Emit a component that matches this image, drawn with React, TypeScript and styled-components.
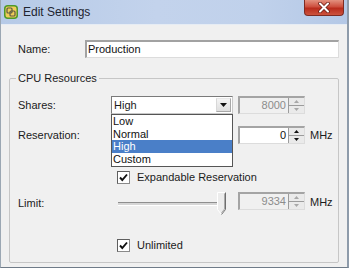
import styled, { createGlobalStyle } from 'styled-components';

const GlobalStyle = createGlobalStyle`
  html, body {
    margin: 0;
    padding: 0;
    background: #fff;
  }
  body {
    font-family: "Liberation Sans", Arial, sans-serif;
    font-size: 11px;
    color: #1b1b1b;
  }
`;

const Window = styled.div`
  width: 349px;
  height: 268px;
  box-sizing: border-box;
  display: flex;
  flex-direction: column;
  background: #f0f0f0;
  border-left: 1px solid #9ba7b3;
  border-right: 2px solid #8e9baa;
  border-bottom: 1px solid #6f7b88;
`;

const TitleBar = styled.div`
  flex: none;
  height: 25px;
  display: flex;
  align-items: flex-start;
  background: linear-gradient(90deg, #b6cae7 0%, #c3d3ec 45%, #c0d1eb 75%, #b4c8e6 100%);
  border-bottom: 1px solid #e6ecf4;
  box-sizing: border-box;
`;

const IconBox = styled.svg`
  flex: none;
  margin: 5px 0 0 3px;
`;

const Title = styled.span`
  margin-left: 5px;
  line-height: 24px;
  font-size: 12px;
  color: #1e2430;
`;

const CloseButton = styled.div`
  flex: none;
  width: 40px;
  height: 16px;
  margin: 0 3px 0 auto;
  box-sizing: border-box;
  display: flex;
  align-items: center;
  justify-content: center;
  border: 1px solid #7e2b22;
  border-top: none;
  border-radius: 0 0 4px 4px;
  background: linear-gradient(#e3917f 0%, #cd4f3e 45%, #b92c1c 55%, #cc533e 100%);
`;

const Body = styled.div`
  flex: 1;
  display: flex;
  flex-direction: column;
  padding: 15px 8px 4px 8px;
  min-height: 0;
`;

const NameRow = styled.div`
  display: flex;
  align-items: center;
  padding-left: 9px;
`;

const NameLabel = styled.span`
  flex: none;
  width: 67px;
  line-height: 13px;
`;

const TextBox = styled.div`
  flex: 1;
  height: 18px;
  box-sizing: border-box;
  padding-left: 1px;
  background: #fff;
  border-style: solid;
  border-width: 2px 1px 1px 2px;
  border-color: #a2a2a2 #dcdcdc #dcdcdc #a2a2a2;
  line-height: 14px;
  color: #111;
`;

const Group = styled.fieldset`
  flex: 1;
  min-width: 0;
  margin: 14px 0 0;
  padding: 11px 0 0 8px;
  border: 1px solid #c6c6c6;
  border-radius: 2px;
`;

const Legend = styled.legend`
  padding: 0 2px;
  margin-left: -2px;
  line-height: 13px;
`;

const Row = styled.div<{ $gap?: number; $align?: string }>`
  display: grid;
  grid-template-columns: 88px 122px 67px auto;
  column-gap: 5px;
  align-items: ${p => p.$align || 'center'};
  margin-top: ${p => p.$gap || 0}px;
`;

const FieldLabel = styled.span<{ $offset?: number }>`
  line-height: 13px;
  margin-top: ${p => p.$offset || 0}px;
`;

const Unit = styled.span<{ $offset?: number }>`
  line-height: 13px;
  margin-top: ${p => p.$offset || 0}px;
`;

const SelectWrap = styled.div`
  position: relative;
`;

const SelectBox = styled.div`
  height: 18px;
  box-sizing: border-box;
  display: flex;
  align-items: center;
  justify-content: space-between;
  padding-left: 2px;
  background: #fff;
  border-style: solid;
  border-width: 1px;
  border-color: #7a7a7a #c8c8c8 #c8c8c8 #7a7a7a;
  line-height: 13px;
`;

const ArrowButton = styled.div`
  width: 15px;
  height: 14px;
  margin-right: 1px;
  box-sizing: border-box;
  display: flex;
  align-items: center;
  justify-content: center;
  background: linear-gradient(#f4f4f4, #dedede);
  border: 1px solid #a8a8a8;
  border-left-color: #d8d8d8;
  border-top-color: #e8e8e8;
`;

const DropList = styled.ul`
  position: absolute;
  top: 18px;
  left: 0;
  width: 122px;
  box-sizing: border-box;
  margin: 0;
  padding: 0 0 1px;
  list-style: none;
  background: #fff;
  border: 1px solid #555;
  z-index: 2;
`;

const Option = styled.li<{ $selected?: boolean }>`
  height: 12.5px;
  line-height: 12.5px;
  padding-left: 1px;
  background: ${p => (p.$selected ? '#4a7fc8' : 'transparent')};
  color: ${p => (p.$selected ? '#fff' : '#111')};
`;

const SpinBox = styled.div<{ $disabled?: boolean }>`
  height: 18px;
  box-sizing: border-box;
  display: flex;
  background: ${p => (p.$disabled ? '#f0f0f0' : '#fff')};
  border-style: solid;
  border-width: 2px 1px 1px 2px;
  border-color: #a4a4a4 #dcdcdc #dcdcdc #a4a4a4;
`;

const SpinValue = styled.span<{ $disabled?: boolean }>`
  flex: 1;
  text-align: right;
  padding-right: 2px;
  line-height: 15px;
  color: ${p => (p.$disabled ? '#8c8c8c' : '#111')};
`;

const SpinButtons = styled.div`
  width: 15px;
  display: flex;
  flex-direction: column;
  border-left: 1px solid #9c9c9c;
`;

const SpinHalf = styled.div`
  flex: 1;
  display: flex;
  align-items: center;
  justify-content: center;
  background: #eaeaea;
  border-bottom: 1px solid #9c9c9c;
  &:last-child {
    border-bottom: none;
  }
`;

const SliderBox = styled.div`
  height: 23px;
  display: flex;
  align-items: flex-start;
  padding-left: 7px;
  padding-right: 6px;
`;

const Track = styled.div`
  flex: 1;
  height: 2px;
  margin-top: 10px;
  background: #d6d6d6;
  border-top: 1px solid #8f8f8f;
  border-bottom: 1px solid #fff;
`;

const CheckCell = styled.label`
  grid-column: 2 / 5;
  display: flex;
  align-items: center;
  gap: 7px;
  margin-left: 6px;
  line-height: 13px;
`;

const CheckBox = styled.span`
  width: 13px;
  height: 13px;
  box-sizing: border-box;
  display: flex;
  align-items: center;
  justify-content: center;
  background: #fff;
  border: 1px solid #8a8a8a;
  border-top-color: #5e5e5e;
  border-left-color: #5e5e5e;
`;

function AppIcon() {
  return (
    <IconBox width="14" height="14" viewBox="0 0 14 14">
      <rect x="0.75" y="0.75" width="12.5" height="12.5" rx="3" fill="#f0cd58" stroke="#4f9a2a" strokeWidth="1.5" />
      <rect x="3" y="3" width="5" height="5" rx="1" fill="none" stroke="#5b5a44" strokeWidth="1.2" />
      <rect x="6" y="6" width="5" height="5" rx="1" fill="none" stroke="#5b5a44" strokeWidth="1.2" />
    </IconBox>
  );
}

function CloseGlyph() {
  return (
    <svg width="12" height="11" viewBox="0 0 12 11">
      <path d="M2 1.5 L10 9.5 M10 1.5 L2 9.5" stroke="#6b1d15" strokeWidth="3.6" strokeLinecap="round" />
      <path d="M2 1.5 L10 9.5 M10 1.5 L2 9.5" stroke="#fff" strokeWidth="2" strokeLinecap="round" />
    </svg>
  );
}

function Spinner({ value, disabled }: { value: string; disabled?: boolean }) {
  const arrow = disabled ? '#a8a8a8' : '#111';
  return (
    <SpinBox $disabled={disabled}>
      <SpinValue $disabled={disabled}>{value}</SpinValue>
      <SpinButtons>
        <SpinHalf>
          <svg width="5" height="3" viewBox="0 0 5 3"><path d="M0 3 L2.5 0 L5 3 Z" fill={arrow} /></svg>
        </SpinHalf>
        <SpinHalf>
          <svg width="5" height="3" viewBox="0 0 5 3"><path d="M0 0 L5 0 L2.5 3 Z" fill={arrow} /></svg>
        </SpinHalf>
      </SpinButtons>
    </SpinBox>
  );
}

function SliderThumb() {
  return (
    <svg width="10" height="23" viewBox="0 0 10 23" style={{ marginLeft: -1, flex: 'none' }}>
      <path d="M0.5 0.5 H8.5 V17.5 L4.5 22.5 L0.5 17.5 Z" fill="#ececec" stroke="#fff" />
      <path d="M8.5 0.5 V17.5 L4.5 22.5" fill="none" stroke="#6e6e6e" />
      <path d="M7.5 1.5 V17 L4.5 21" fill="none" stroke="#a9a9a9" />
    </svg>
  );
}

function Check() {
  return (
    <svg width="9" height="9" viewBox="0 0 9 9">
      <path d="M1 4.5 L3.3 7 L8 1.5" fill="none" stroke="#111" strokeWidth="1.9" />
    </svg>
  );
}

const shares = ['Low', 'Normal', 'High', 'Custom'];

export default function App() {
  return (
    <>
      <GlobalStyle />
      <Window>
        <TitleBar>
          <AppIcon />
          <Title>Edit Settings</Title>
          <CloseButton>
            <CloseGlyph />
          </CloseButton>
        </TitleBar>
        <Body>
          <NameRow>
            <NameLabel>Name:</NameLabel>
            <TextBox>Production</TextBox>
          </NameRow>
          <Group>
            <Legend>CPU Resources</Legend>
            <Row>
              <FieldLabel>Shares:</FieldLabel>
              <SelectWrap>
                <SelectBox>
                  High
                  <ArrowButton>
                    <svg width="7" height="4" viewBox="0 0 7 4"><path d="M0 0 H7 L3.5 4 Z" fill="#111" /></svg>
                  </ArrowButton>
                </SelectBox>
                <DropList>
                  {shares.map(s => (
                    <Option key={s} $selected={s === 'High'}>{s}</Option>
                  ))}
                </DropList>
              </SelectWrap>
              <Spinner value="8000" disabled />
            </Row>
            <Row $gap={12}>
              <FieldLabel>Reservation:</FieldLabel>
              <span />
              <Spinner value="0" />
              <Unit>MHz</Unit>
            </Row>
            <Row $gap={27}>
              <CheckCell>
                <CheckBox><Check /></CheckBox>
                Expandable Reservation
              </CheckCell>
            </Row>
            <Row $gap={8} $align="start">
              <FieldLabel $offset={5}>Limit:</FieldLabel>
              <SliderBox>
                <Track />
                <SliderThumb />
              </SliderBox>
              <Spinner value="9334" disabled />
              <Unit $offset={4}>MHz</Unit>
            </Row>
            <Row $gap={24}>
              <CheckCell>
                <CheckBox><Check /></CheckBox>
                Unlimited
              </CheckCell>
            </Row>
          </Group>
        </Body>
      </Window>
    </>
  );
}
